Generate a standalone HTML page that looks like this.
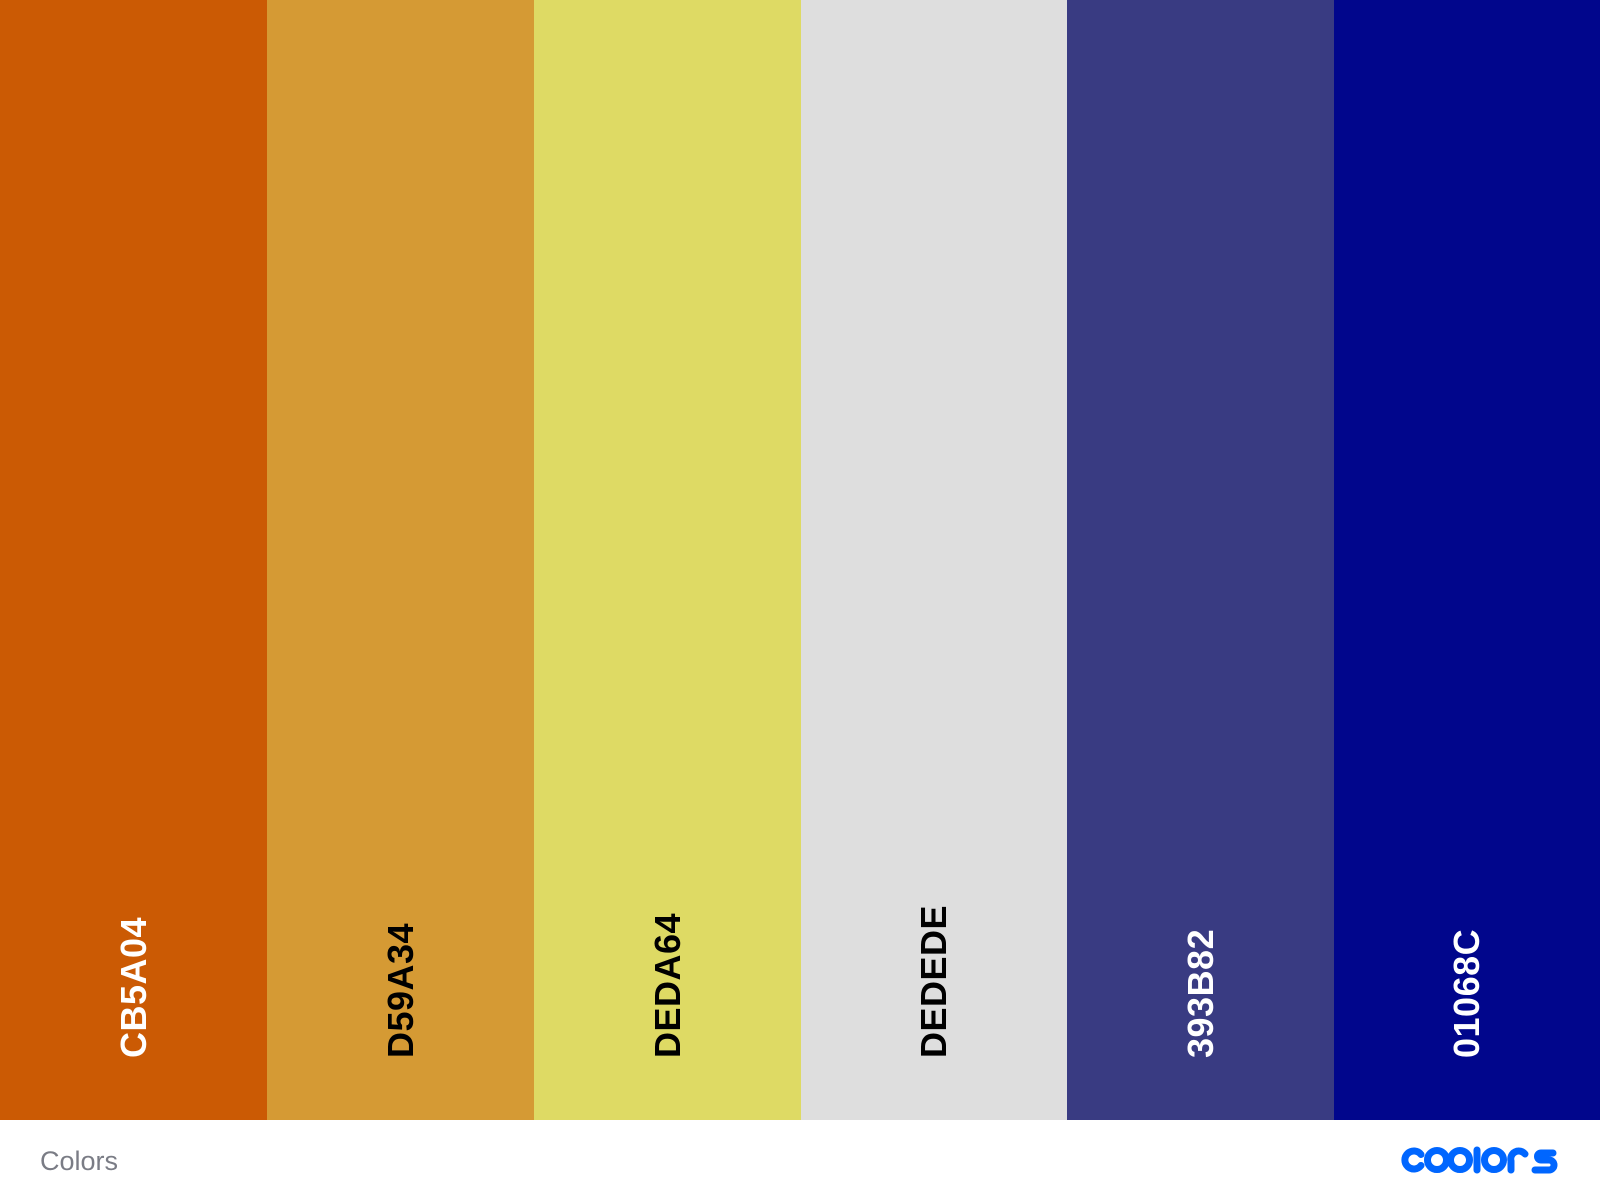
<!DOCTYPE html>
<html><head><style>
html,body{margin:0;padding:0;width:1600px;height:1200px;overflow:hidden;background:#fff;font-family:"Liberation Sans",sans-serif}
.c{position:absolute;top:0;height:1120px}
.t{position:absolute;left:50%;top:1058px;transform-origin:0 0;transform:rotate(-90deg) translateY(-50%);font-size:36px;font-weight:bold;white-space:nowrap;line-height:1;letter-spacing:0.5px}
.w{color:#fff}.b{color:#000}
</style></head><body>
<div class="c" style="left:0;width:267px;background:#CB5A04"><div class="t w">CB5A04</div></div>
<div class="c" style="left:267px;width:267px;background:#D59A34"><div class="t b">D59A34</div></div>
<div class="c" style="left:534px;width:267px;background:#DEDA64"><div class="t b">DEDA64</div></div>
<div class="c" style="left:801px;width:266px;background:#DEDEDE"><div class="t b">DEDEDE</div></div>
<div class="c" style="left:1067px;width:267px;background:#393B82"><div class="t w">393B82</div></div>
<div class="c" style="left:1334px;width:266px;background:#01068C"><div class="t w">01068C</div></div>
<div style="position:absolute;left:40px;top:1148px;font-size:27px;color:#7a7c85;line-height:1">Colors</div>
<svg style="position:absolute;left:1400px;top:1146px" width="162" height="28" viewBox="0 0 162 28" fill="none" stroke="#0066FF" stroke-width="7" stroke-linecap="round">
<path d="M21,8.5 A9,9 0 1 0 21,19.5"/>
<circle cx="37" cy="14" r="9.5"/>
<circle cx="60" cy="14" r="9.5"/>
<path d="M77,4 V24"/>
<circle cx="94" cy="14" r="9.5"/>
<path d="M111,24 V15 A8,8 0 0 1 125,8"/>
<path d="M153,7 H141 a3.5,3.5 0 0 0 0,7 h8 a5,5 0 0 1 0,10 H135"/>
</svg>
</body></html>
